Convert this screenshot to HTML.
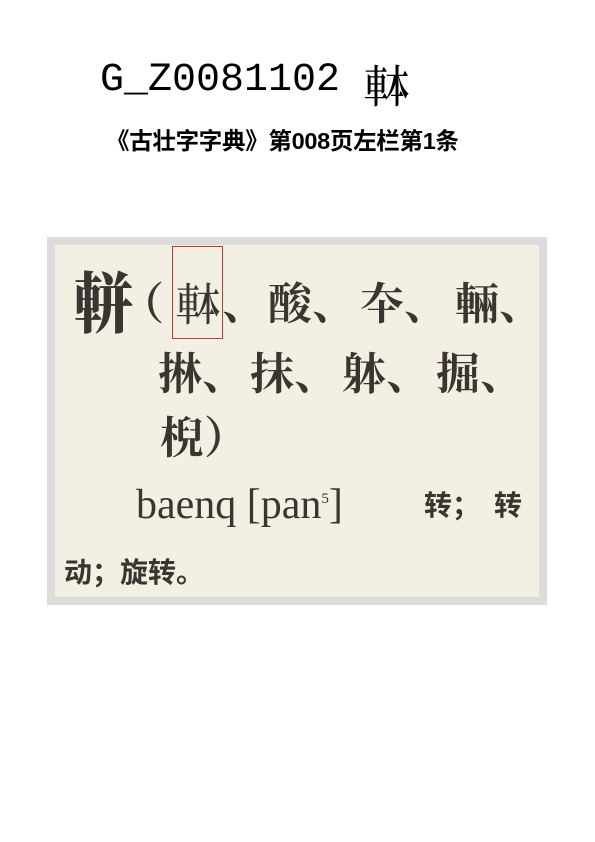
<!DOCTYPE html>
<html><head><meta charset="utf-8"><style>
body{margin:0;width:595px;height:842px;background:#fff;position:relative;overflow:hidden;font-family:"Liberation Sans","Noto Sans CJK SC",sans-serif}
.t{position:absolute;left:100px;top:56px;font-family:"Liberation Mono","Noto Sans CJK SC",monospace;font-size:40px;line-height:50px;color:#000}
.cmp{position:absolute;width:48px;height:46px;font-family:"Noto Serif CJK SC",serif;font-weight:bold}
.cmp span{position:absolute;top:0;transform:scaleX(.55);transform-origin:left}
.s{position:absolute;left:106px;top:126px;font-size:23.5px;font-weight:bold;line-height:30px;color:#000;font-family:"Liberation Sans","Noto Sans CJK SC",sans-serif;letter-spacing:-0.3px}
.img{position:absolute;left:47px;top:237px;width:484px;height:352px;border:8px solid #dcdcdc;background:#f3efe3}
.c{position:absolute;white-space:nowrap;font-family:"Noto Serif CJK SC",serif;font-weight:bold;color:#3a3530;line-height:1}
.box{position:absolute;left:172px;top:246px;width:49px;height:91px;border:1.5px solid #c43a30}
</style></head><body>
<div class="t">G_Z0081102</div>
<div class="cmp" style="left:364px;top:60px;font-size:44px;line-height:46px;color:#000"><span style="left:0">車</span><span style="left:21px">本</span></div>
<div class="s">《古壮字字典》第008页左栏第1条</div>
<div class="img"></div>
<div class="c" style="left:74px;top:266px;font-size:66px;transform:scaleX(.9);transform-origin:left;font-weight:900">軿</div>
<div class="c" style="left:120px;top:278px;font-size:44px">（</div>
<div class="cmp" style="left:176px;top:278px;font-size:44px;line-height:46px;color:#3a3530"><span style="left:0">車</span><span style="left:20px">本</span></div>
<div class="c" style="left:222px;top:278px;font-size:44px">、</div>
<div class="c" style="left:268px;top:278px;font-size:44px">酸、</div>
<div class="c" style="left:360px;top:278px;font-size:44px">夲、</div>
<div class="c" style="left:455px;top:278px;font-size:44px">輛、</div>
<div class="c" style="left:158px;top:348px;font-size:44px">㨆、</div>
<div class="c" style="left:250px;top:348px;font-size:44px">抹、</div>
<div class="c" style="left:342px;top:348px;font-size:44px">躰、</div>
<div class="c" style="left:436px;top:348px;font-size:44px">掘、</div>
<div class="c" style="left:160px;top:412px;font-size:44px">棿）</div>
<div class="c" style="left:136px;top:474px;font-family:'Liberation Serif',serif;font-weight:normal;font-size:42px;line-height:50px">baenq [pan<sup style="font-size:15px">5</sup>]</div>
<div class="c" style="left:424px;top:490px;font-size:28px;font-family:'Noto Sans CJK SC',sans-serif">转；</div>
<div class="c" style="left:494px;top:490px;font-size:28px;font-family:'Noto Sans CJK SC',sans-serif">转</div>
<div class="c" style="left:64px;top:557px;font-size:28px;font-family:'Noto Sans CJK SC',sans-serif">动；旋转。</div>
<div class="box"></div>
</body></html>
